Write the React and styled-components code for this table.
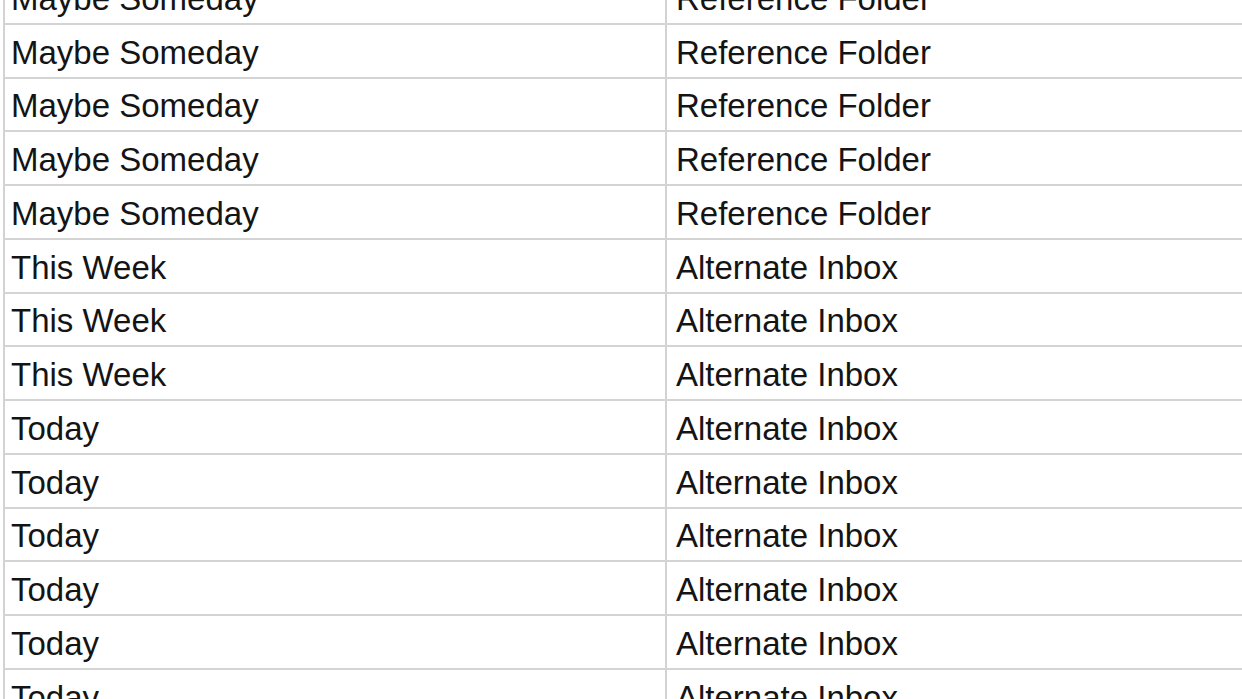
import styled, { createGlobalStyle } from "styled-components";

const GlobalStyle = createGlobalStyle`
  html, body {
    margin: 0;
    padding: 0;
    background: #ffffff;
    overflow: hidden;
  }
`;

const rows = [
  ["Maybe Someday", "Reference Folder"],
  ["Maybe Someday", "Reference Folder"],
  ["Maybe Someday", "Reference Folder"],
  ["Maybe Someday", "Reference Folder"],
  ["Maybe Someday", "Reference Folder"],
  ["This Week", "Alternate Inbox"],
  ["This Week", "Alternate Inbox"],
  ["This Week", "Alternate Inbox"],
  ["Today", "Alternate Inbox"],
  ["Today", "Alternate Inbox"],
  ["Today", "Alternate Inbox"],
  ["Today", "Alternate Inbox"],
  ["Today", "Alternate Inbox"],
  ["Today", "Alternate Inbox"],
];

const App = () => {
  return (
    <>
      <GlobalStyle />
      <Sheet>
        {rows.map(([when, where], i) => (
          <Row key={i}>
            <Cell>{when}</Cell>
            <Cell $last>{where}</Cell>
          </Row>
        ))}
      </Sheet>
    </>
  );
};

const Sheet = styled.div`
  margin: -29px 0 0 3px;
  border-left: 2px solid #d3d3d3;
  font-family: "Liberation Sans", Arial, sans-serif;
  font-size: 33px;
  color: #141414;
`;

const Row = styled.div`
  display: grid;
  grid-template-columns: 662px 1fr;
  height: 53.75px;
  box-sizing: border-box;
  border-bottom: 2px solid #d4d4d4;
`;

const Cell = styled.div`
  display: flex;
  align-items: center;
  padding: 3px 0 0 ${(p) => (p.$last ? "9px" : "6px")};
  border-right: ${(p) => (p.$last ? "none" : "2px solid #d3d3d3")};
  white-space: nowrap;
  overflow: hidden;
  line-height: 1;
`;

export default App;
